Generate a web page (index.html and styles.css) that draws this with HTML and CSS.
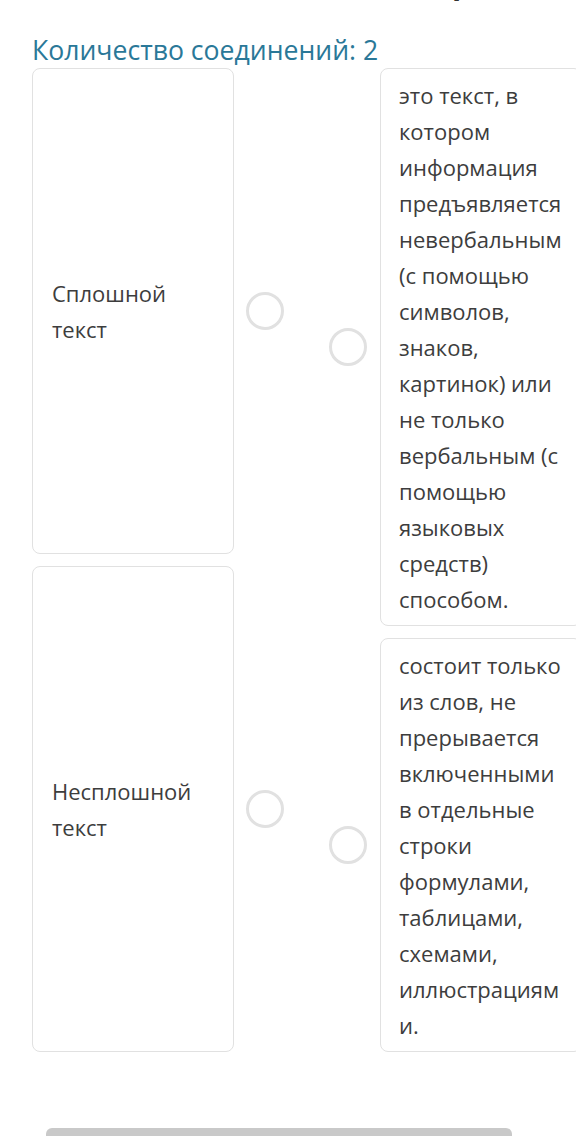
FILE: index.html
```html
<!DOCTYPE html>
<html lang="ru">
<head>
<meta charset="UTF-8" />
<meta name="viewport" content="width=device-width, initial-scale=1.0"/>
<title>Соотнесите</title>
<link rel="stylesheet" href="styles.css">
</head>
<body>

<div class="page">
  <h1 class="task-title">Сопоставьте вид текста и определение</h1>
  <div class="counter">Количество соединений: 2</div>

  <div class="match">
    <!-- Left column: terms -->
    <div class="col">
      <div class="item">
        <div class="card">Сплошной текст</div>
        <span class="dot"></span>
      </div>
      <div class="item">
        <div class="card">Несплошной текст</div>
        <span class="dot"></span>
      </div>
    </div>

    <!-- Right column: definitions -->
    <div class="col">
      <div class="item">
        <span class="dot"></span>
        <div class="card">это текст, в котором информация предъявляется невербальным (с помощью символов, знаков, картинок) или не только вербальным (с помощью языковых средств) способом.</div>
      </div>
      <div class="item">
        <span class="dot"></span>
        <div class="card">состоит только из слов, не прерывается включенными в отдельные строки формулами, таблицами, схемами, иллюстрациям и.</div>
      </div>
    </div>
  </div>

  <button class="next-btn"></button>
</div>

</body>
</html>
```

FILE: styles.css
```css
:root {
  --accent: #2a7898;
  --border: #e1e1e1;
  --text: #3d3d3d;
}
body {
  margin: 0;
  font-family: "Open Sans", "Noto Sans", sans-serif;
  background: #fff;
  color: var(--text);
  overflow: hidden;
}
.page {
  width: 576px;
}
.task-title {
  margin: -35px 0 31px;
  font-size: 30px;
  line-height: 36px;
  font-weight: bold;
  text-align: center;
  color: #333;
  white-space: nowrap;
}
.counter {
  padding-left: 32px;
  font-size: 26.6px;
  line-height: 36px;
  color: var(--accent);
}
.match {
  display: flex;
  gap: 45px;
  padding-left: 32px;
}
.col {
  display: flex;
  flex-direction: column;
  gap: 12px;
}
.item {
  flex: 1;
  display: flex;
  align-items: center;
}
.col:first-child .item {
  gap: 12px;
  align-items: stretch;
}
.col:first-child .dot {
  align-self: center;
}
.col:last-child .item {
  gap: 13px;
}
.card {
  width: 202px;
  box-sizing: border-box;
  padding: 8px 19px 8px 18px;
  border: 1px solid var(--border);
  border-radius: 8px;
  font-size: 22px;
  line-height: 36px;
  display: flex;
  align-items: center;
  flex-shrink: 0;
}
.col:first-child .card {
  padding-left: 19px;
}
.dot {
  width: 38px;
  height: 38px;
  box-sizing: border-box;
  border: 3px solid var(--border);
  border-radius: 50%;
  flex-shrink: 0;
}
.next-btn {
  display: block;
  width: 466px;
  height: 50px;
  margin: 76px 0 0 46px;
  border: none;
  border-radius: 6px;
  background: #c9c9c9;
}
```
